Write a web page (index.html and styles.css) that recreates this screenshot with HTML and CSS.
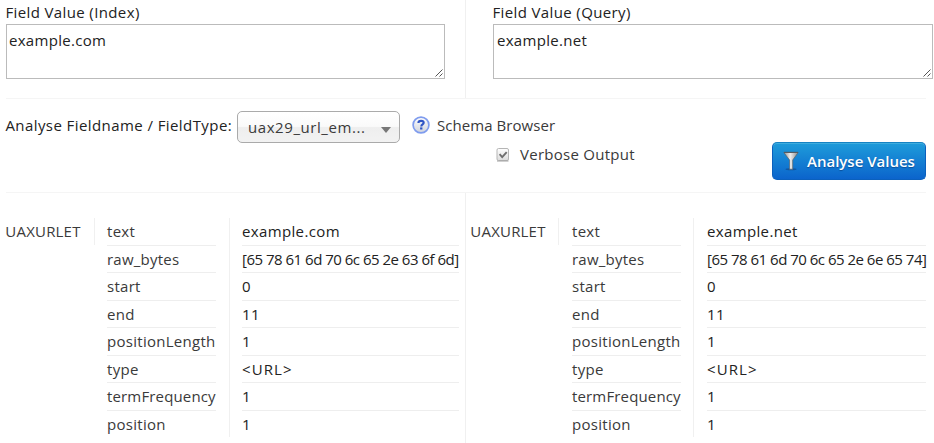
FILE: index.html
```html
<!DOCTYPE html>
<html lang="en">
<head>
<meta charset="utf-8">
<title>Analysis</title>
<link rel="stylesheet" href="styles.css">
</head>
<body>
<main class="analysis">
  <section class="fields">
    <div class="field field-index">
      <label class="label">Field Value (Index)</label>
      <div class="box"><span>example.com</span>
        <svg class="grip" width="8" height="8" viewBox="0 0 8 8"><path d="M.5 7.5l7-7M4.5 7.5l3-3"/></svg></div>
    </div>
    <div class="field field-query">
      <label class="label">Field Value (Query)</label>
      <div class="box"><span>example.net</span>
        <svg class="grip" width="8" height="8" viewBox="0 0 8 8"><path d="M.5 7.5l7-7M4.5 7.5l3-3"/></svg></div>
    </div>
  </section>
  <section class="controls">
    <span class="caption">Analyse Fieldname / FieldType:</span>
    <div class="select"><span>uax29_url_em...</span><i class="arrow"></i></div>
    <div class="options">
      <a class="schema">
        <svg width="18" height="18" viewBox="0 0 18 18">
          <defs><linearGradient id="help" x2="0" y2="1"><stop stop-color="#fff"/><stop offset="1" stop-color="#cfd3dc"/></linearGradient></defs>
          <circle cx="9" cy="9" r="7.9" fill="url(#help)" stroke="#7f9cee" stroke-width="1.7"/>
          <path d="M6.4 7Q6.4 4.9 9.1 4.9q2.6 0 2.6 1.9c0 1.6-2.4 1.6-2.4 3.6" fill="none" stroke="#2f55c4" stroke-width="2.1"/>
          <rect x="8.1" y="11.4" width="2.3" height="2.1" fill="#2f55c4"/>
        </svg><span>Schema Browser</span></a>
      <label class="verbose">
        <svg width="14" height="14" viewBox="0 0 14 14">
          <defs><linearGradient id="chk" x2="0" y2="1"><stop stop-color="#fff"/><stop offset="1" stop-color="#dcdcdc"/></linearGradient></defs>
          <rect x="1" y=".5" width="11.5" height="12" rx="1.5" fill="url(#chk)" stroke="#b5b5b5"/>
          <path d="M1 13h11.5" stroke="#a2a2a2"/>
          <path d="M3.6 6.2l2.6 2.9 4.5-5" fill="none" stroke="#6e6e6e" stroke-width="1.9"/>
        </svg><span>Verbose Output</span></label>
    </div>
    <button class="submit">
      <svg width="16" height="20" viewBox="0 0 16 20">
        <defs><linearGradient id="fun"><stop stop-color="#8f8f8f"/><stop offset=".45" stop-color="#eee"/><stop offset="1" stop-color="#8a8a8a"/></linearGradient></defs>
        <ellipse cx="8" cy="18.3" rx="5.5" ry="1" fill="#123f78" opacity=".55"/>
        <path d="M.8 1.5h14.4L9.7 9v9.2H6.6V9z" fill="url(#fun)" stroke="#59636c" stroke-width=".7"/>
        <path d="M1 1.4h14" stroke="#555c63" stroke-width="1.2"/>
      </svg><span>Analyse Values</span></button>
  </section>
  <section class="results">
    <div class="result">
      <div class="stage">UAXURLET</div>
      <div class="keys"><div>text</div><div class="raw">raw_bytes</div><div>start</div><div>end</div><div>positionLength</div><div>type</div><div class="freq">termFrequency</div><div>position</div></div>
      <div class="values"><div>example.com</div><div class="bytes">[65 78 61 6d 70 6c 65 2e 63 6f 6d]</div><div>0</div><div>11</div><div>1</div><div class="type">&lt;URL&gt;</div><div>1</div><div>1</div></div>
    </div>
    <div class="result result-query">
      <div class="stage">UAXURLET</div>
      <div class="keys"><div>text</div><div class="raw">raw_bytes</div><div>start</div><div>end</div><div>positionLength</div><div>type</div><div class="freq">termFrequency</div><div>position</div></div>
      <div class="values"><div>example.net</div><div class="bytes">[65 78 61 6d 70 6c 65 2e 6e 65 74]</div><div>0</div><div>11</div><div>1</div><div class="type">&lt;URL&gt;</div><div>1</div><div>1</div></div>
    </div>
  </section>
</main>
</body>
</html>
```
FILE: styles.css
```css
* { box-sizing: border-box; }
body { margin: 0; background: #fff; color: #222; font: 15px/20px "Open Sans", "Noto Sans", sans-serif; }
.analysis { width: 934px; height: 443px; overflow: hidden; white-space: nowrap; }
svg { display: block; flex: none; }

.fields { display: flex; height: 98px; margin-left: 6px; }
.field { padding-top: 2px; }
.field-index { width: 460px; height: 98px; border-right: 1px solid #f0f0f0; }
.field-query { padding-left: 27px; }
.label { display: block; height: 22px; letter-spacing: .38px; text-indent: -.6px; }
.box { position: relative; width: 439px; height: 55px; padding: 5px 2px; border: 1px solid #bbb; letter-spacing: .3px; }
.field-query .box { width: 440px; padding-left: 3px; }
.grip { position: absolute; right: 1px; bottom: 1px; }
.grip path { fill: none; stroke: #555; stroke-width: 1; }

.controls { display: flex; width: 920px; height: 95px; margin-left: 6px; border-top: 1px solid #f5f5f5; border-bottom: 1px solid #f5f5f5; }
.caption { width: 231px; padding-top: 16px; letter-spacing: .42px; text-indent: -.6px; }
.select { display: flex; align-items: center; justify-content: space-between; width: 163px; height: 32px; margin-top: 12px; padding: 0 8px 1px 10px; border: 1px solid #aaa; border-radius: 5px; background: linear-gradient(#fff 0, #fafafa 48%, #eee 52%, #f2f2f2 100%); color: #3a3a3a; letter-spacing: .57px; }
.arrow { margin-top: 6px; border: 5px solid transparent; border-top: 6px solid #777; border-bottom: 0; }
.options { width: 360px; padding: 16px 0 0 12px; color: #3a3a3a; }
.schema { display: flex; gap: 7px; height: 29px; letter-spacing: .06px; }
.schema svg { margin-top: 1px; }
.verbose { display: flex; gap: 10px; padding-left: 84px; letter-spacing: .27px; }
.verbose svg { margin-top: 4px; }
.submit { display: flex; align-items: center; gap: 8px; width: 154px; height: 38px; margin: 43px 0 0 12px; padding: 0 0 1px 10px; border: 1px solid #0b60bd; border-top-color: #1683c4; border-radius: 5px; background: linear-gradient(#1e9cda, #0b64cc); box-shadow: inset 0 1px #3fadde; color: #fff; font: 600 15px/20px "Open Sans", sans-serif; letter-spacing: 0; text-shadow: 0 1px 1px #0b4f99; white-space: nowrap; }

.results { display: flex; height: 250px; margin-left: 6px; }
.result { display: flex; width: 460px; padding-top: 25px; border-right: 1px solid #f0f0f0; }
.result-query { width: 468px; padding-left: 5px; border-right: 0; }
.stage { width: 89px; height: 27px; border-right: 1px solid #f0f0f0; line-height: 27px; color: #3a3a3a; letter-spacing: .2px; text-indent: -.7px; }
.result-query .stage { width: 88px; }
.keys { display: grid; width: 135px; height: 219px; padding: 0 13px 0 12px; border-right: 1px solid #f0f0f0; color: #3a3a3a; letter-spacing: .28px; }
.result-query .keys { padding-left: 13px; }
.values { display: grid; width: 229px; height: 219px; padding-left: 12px; letter-spacing: .36px; }
.result-query .values { width: 232px; padding-left: 13px; }
.keys, .values { grid-template-rows: 28px 27px 28px 27px 28px 27px 28px 26px; }
.keys div, .values div { border-bottom: 1px solid #eee; line-height: 27px; }
.keys div:last-child, .values div:last-child { border-bottom: 0; }
.keys .raw { letter-spacing: .22px; }
.keys .freq { letter-spacing: .15px; }
.values .bytes { letter-spacing: -.5px; }
.values .type { letter-spacing: 1.1px; }
```
